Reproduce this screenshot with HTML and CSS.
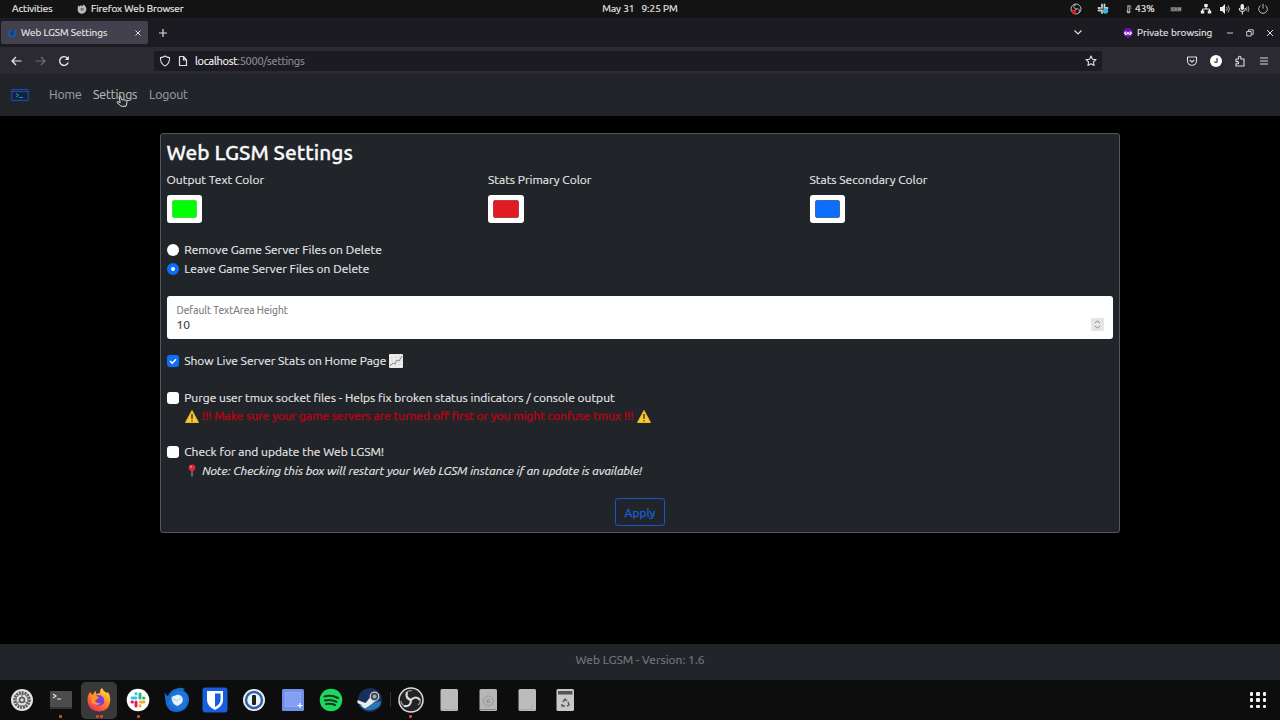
FILE: index.html
```html
<!DOCTYPE html>
<html lang="en">
<head>
<meta charset="utf-8">
<title>Web LGSM Settings</title>
<link rel="stylesheet" href="styles.css">
</head>
<body>
<header class="system-bar">
  <div class="system-left">
    <span class="activities">Activities</span>
    <svg class="fox-mini" viewBox="0 0 10 10"><path d="M1 1.500l1.500 1 1.500-1.500 1 1.500L6.500.5Q10 3 9.300 6 8 10 4.500 9.700.5 9 .6 5z" fill="#bbb"/><path d="M3.500 4h3l.5 2-2 1-1.500-1z" fill="#777"/></svg>
    <span class="app-name">Firefox Web Browser</span>
  </div>
  <time class="clock"><span>May 31</span><span>9:25 PM</span></time>
  <div class="system-right">
    <svg class="ic-obs" viewBox="0 0 12 12"><circle cx="6" cy="6" r="5" fill="none" stroke="#bbb"/><path d="M6 6C3 5 3 2 6 2M6 6c3-1 4 1 3 4M6 6c0 2-2 3-4 2" fill="none" stroke="#bbb"/><circle cx="3.800" cy="8.800" r="2.200" fill="#e01b24"/></svg>
    <svg class="ic-slack" viewBox="0 0 12 12"><path d="M5 1.500V5M1.500 5H3M7.500 1.500V5M10.500 5H9M1.500 7.500H5M5 10V9" stroke="#ccc" stroke-width="1.800" stroke-linecap="round"/><circle cx="8.500" cy="8" r="2.700" fill="#35b8e0"/></svg>
    <svg class="ic-temp" viewBox="0 0 8 12"><path d="M2 1.500h3v5l1 2.500-1 2H2L1 9l1-2.500z" fill="#aaa"/><path d="M3.500 3v6" stroke="#333"/><path d="M5 2.500h2M5 5h2" stroke="#aaa"/></svg>
    <span class="percent">43%</span>
    <svg class="ic-key" viewBox="0 0 12 8"><rect x=".5" y="2" width="11" height="4.500" fill="#555"/><path d="M4 3H2v2.500h2M5.300 2.500v3.500M7.500 3L5.500 4.500l2 1M8.500 5.700V3h2v2.700M8.500 4.500h2" fill="none" stroke="#aaa" stroke-width=".7"/></svg>
    <svg class="ic-net" viewBox="0 0 12 12"><path d="M4.300 1h3.400v3H4.300zM.8 7.500h3.400v3H.8zM7.800 7.500h3.400v3H7.800z" fill="#eee"/><path d="M6 4v2M2.500 8V6h7v2" fill="none" stroke="#eee"/></svg>
    <svg class="ic-vol" viewBox="0 0 12 12"><path d="M1 4h2l3-3v10L3 8H1z" fill="#eee"/><path d="M7.500 4q1.500 2 0 4M9 2.500q3 3.500 0 7" fill="none" stroke="#aaa"/></svg>
    <svg class="ic-mic" viewBox="0 0 12 12"><rect x="2.500" y="1" width="3.500" height="6" rx="1.700" fill="#eee"/><path d="M1.300 5v1q0 2.500 3 2.500t3-2.500V5M4.300 8v3.500" fill="none" stroke="#eee"/><path d="M8.500 4q1 2 0 4M10 3q1.800 3 0 6" fill="none" stroke="#999"/></svg>
    <svg class="ic-power" viewBox="0 0 12 12"><path d="M3.500 2.500a4.300 4.300 0 1 0 5 0M6 .8v4.800" fill="none" stroke="#bbb"/></svg>
  </div>
</header>

<div class="tab-strip">
  <div class="tab">
    <svg class="favicon" viewBox="0 0 8 10"><path d="M0 4l2-2 1-1v2l5-1-1 7H1z" fill="#155fae"/><path d="M1 4l5-1v4l-3 1z" fill="#0c3f83"/></svg>
    <span class="tab-title">Web LGSM Settings</span>
    <svg class="tab-close" viewBox="0 0 6 6"><path d="M.5.5l5 5M5.500.5l-5 5" stroke="#ddd"/></svg>
  </div>
  <svg class="new-tab" viewBox="0 0 8 8"><path d="M4 0v8M0 4h8" stroke="#ddd" stroke-width="1.200"/></svg>
  <div class="window-tools">
    <svg class="ic-down" viewBox="0 0 8 5"><path d="M.5.5L4 4 7.500.5" fill="none" stroke="#ddd" stroke-width="1.200"/></svg>
    <svg class="ic-mask" viewBox="0 0 10 10"><path d="M1 1.500Q5-1 9 1.500 11 8 5 10-1 8 1 1.500z" fill="#7111b5"/><path d="M1.200 4q2-1 3.800.4Q7 3 8.800 4 9 7 7 7 6 7 5 5.700 4 7 3 7 1 7 1.200 4z" fill="#fff"/><circle cx="3.200" cy="5" r=".8" fill="#7111b5"/><circle cx="6.800" cy="5" r=".8" fill="#7111b5"/></svg>
    <span class="private-label">Private browsing</span>
    <svg class="ic-min" viewBox="0 0 8 8"><path d="M1 4h6" stroke="#ccc"/></svg>
    <svg class="ic-max" viewBox="0 0 8 8"><path d="M.7 2.500h4.500v4.500H.7zM2.500 2V.8h4.700v4.500H6" fill="none" stroke="#ccc"/></svg>
    <svg class="ic-close" viewBox="0 0 8 8"><path d="M1 1l6 6M7 1L1 7" stroke="#ddd"/></svg>
  </div>
</div>

<div class="toolbar">
  <svg class="ic-back" viewBox="0 0 11 10"><path d="M10.500 5H1M5 1L1 5l4 4" fill="none" stroke="#eee" stroke-width="1.200"/></svg>
  <svg class="ic-forward" viewBox="0 0 11 10"><path d="M.5 5H10M6 1l4 4-4 4" fill="none" stroke="#6d6c74" stroke-width="1.200"/></svg>
  <svg class="ic-reload" viewBox="0 0 12 12"><path d="M10.200 7.500A4.400 4.400 0 1 1 9.300 3" fill="none" stroke="#eee" stroke-width="1.300"/><path d="M10.800 1v4H6.800z" fill="#eee"/></svg>
  <div class="url-bar">
    <svg class="ic-shield" viewBox="0 0 12 12"><path d="M6 1Q8 2.400 10.500 2.600 11 8.500 6 11 1 8.500 1.500 2.600 4 2.400 6 1z" fill="none" stroke="#ddd" stroke-width="1.100"/></svg>
    <svg class="ic-page" viewBox="0 0 10 12"><path d="M1.500 1.500h4L8.500 5v5.500h-7zM5.500 1.500V5h3" fill="none" stroke="#ddd" stroke-width="1.200" stroke-linejoin="round"/></svg>
    <span class="url"><b>localhost</b>:5000/settings</span>
    <svg class="ic-star" viewBox="0 0 12 12"><path d="M6 1l1.500 3.200 3.500.4-2.600 2.400.7 3.500L6 8.800l-3.100 1.700.7-3.500L1 4.600l3.500-.4z" fill="none" stroke="#ddd" stroke-width="1.100" stroke-linejoin="round"/></svg>
  </div>
  <div class="toolbar-tools">
    <svg viewBox="0 0 12 12"><path d="M1.500 2h9v4a4.500 4.300 0 0 1-9 0zM3.700 5L6 7l2.300-2" fill="none" stroke="#ddd" stroke-width="1.100" stroke-linejoin="round"/></svg>
    <span class="profile">J</span>
    <svg viewBox="0 0 12 12"><path d="M2 4h2.500V2.500a1.200 1.200 0 0 1 2.400 0V4H10v7H2V8.800h1.500a1 1 0 0 0 0-2.200H2z" fill="none" stroke="#ddd" stroke-width="1.100" stroke-linejoin="round"/></svg>
    <svg viewBox="0 0 12 12"><path d="M2 3h8M2 6h8M2 9h8" stroke="#ddd" stroke-width="1.100"/></svg>
  </div>
</div>

<nav class="navbar">
  <svg class="brand" viewBox="0 0 18 12"><rect x=".7" y=".7" width="16.600" height="10.600" rx="1" fill="#12233d" stroke="#2346a8" stroke-width="1.200"/><path d="M1 2.500h16" stroke="#2346a8"/><path d="M5 4.500l2.500 1.700L5 8" fill="none" stroke="#18a5b5"/><path d="M8 8.500h4" stroke="#1f8fa8"/></svg>
  <a class="nav-home">Home</a>
  <a class="nav-settings">Settings
    <svg class="pointer" viewBox="0 0 12 12"><path d="M3 1.500q1-1 1.700 0l.8 3 4.300.7q1.300.4 1.200 2L10 11.300H5.200L1 7.500q0-1.500 1.500-.7L4.200 7.600z" fill="#26292d" stroke="#ddd"/></svg>
  </a>
  <a class="nav-logout">Logout</a>
</nav>

<main class="page">
  <form class="card">
    <h1>Web LGSM Settings</h1>
    <div class="colors">
      <div><label>Output Text Color</label><span class="swatch"><i class="green"></i></span></div>
      <div><label>Stats Primary Color</label><span class="swatch"><i class="red"></i></span></div>
      <div><label>Stats Secondary Color</label><span class="swatch"><i class="blue"></i></span></div>
    </div>
    <div class="choice first"><span class="radio"></span><span>Remove Game Server Files on Delete</span></div>
    <div class="choice"><span class="radio on"></span><span>Leave Game Server Files on Delete</span></div>
    <div class="number-field">
      <div><div class="field-label">Default TextArea Height</div><div class="field-value">10</div></div>
      <span class="spinner"><svg viewBox="0 0 13 13"><path d="M4 5l2.500-2L9 5M4 8l2.500 2L9 8" fill="none" stroke="#888"/></svg></span>
    </div>
    <div class="choice live">
      <span class="check on"><svg viewBox="0 0 12 12"><path d="M3 6l2.200 2.200L9 4.200" fill="none" stroke="#fff" stroke-width="1.600"/></svg></span>
      <span>Show Live Server Stats on Home Page</span>
      <svg class="chart" viewBox="0 0 14 14"><rect width="14" height="14" rx="1" fill="#eee"/><path d="M3 0v14M6.500 0v14M10 0v14M0 3.500h14M0 7h14M0 10.500h14" stroke="#d5d5d5" stroke-width=".5"/><path d="M1 12l3-3 2 1 2-4 2 1 3-5" fill="none" stroke="#888"/></svg>
    </div>
    <div class="choice purge"><span class="check"></span><span>Purge user tmux socket files - Helps fix broken status indicators / console output</span></div>
    <div class="warning">
      <svg viewBox="0 0 14 13"><path d="M7 .5L13.500 12.500H.5z" fill="#fbc932" stroke="#e7b72a" stroke-linejoin="round"/><path d="M7 4v5M7 10.200v1.300" stroke="#443b22" stroke-width="1.500"/></svg>
      <span class="warning-text">!!! Make sure your game servers are turned off first or you might confuse tmux !!!</span>
      <svg viewBox="0 0 14 13"><path d="M7 .5L13.500 12.500H.5z" fill="#fbc932" stroke="#e7b72a" stroke-linejoin="round"/><path d="M7 4v5M7 10.200v1.300" stroke="#443b22" stroke-width="1.500"/></svg>
    </div>
    <div class="choice update"><span class="check"></span><span>Check for and update the Web LGSM!</span></div>
    <div class="note">
      <svg viewBox="0 0 8 13"><path d="M4 6v6.500" stroke="#8796a0" stroke-width="1.200"/><circle cx="4" cy="3.800" r="3.300" fill="#e02830"/><circle cx="3" cy="2.700" r="1" fill="#ff8580"/></svg>
      <em>Note: Checking this box will restart your Web LGSM instance if an update is available!</em>
    </div>
    <button type="button" class="apply">Apply</button>
  </form>
</main>

<footer class="footer"><span>Web LGSM - Version: 1.6</span></footer>

<div class="dock">
  <div class="apps">
    <span class="app"><svg viewBox="0 0 26 26"><circle cx="13" cy="13" r="11" fill="#e0e0e0"/><circle cx="13" cy="13" r="7.500" fill="none" stroke="#555" stroke-width="2.500" stroke-dasharray="2 .9"/><circle cx="13" cy="13" r="6" fill="none" stroke="#666"/><circle cx="13" cy="13" r="2.500" fill="#ddd" stroke="#555" stroke-width="1.500"/><path d="M13 7v4M8 16l3.500-2M18 16l-3.500-2" stroke="#666"/></svg></span>
    <span class="app running"><svg viewBox="0 0 26 26"><rect x="2" y="4" width="22" height="18" rx="1" fill="#4b4c4c"/><path d="M2 21h22" stroke="#333" stroke-width="2"/><path d="M5 7l3 2-3 2M9 12h4" fill="none" stroke="#e6e6e6" stroke-width="1.200"/></svg></span>
    <span class="app running twice active"><svg viewBox="0 0 26 26"><defs><linearGradient id="fire" x1=".8" y1="0" x2=".2" y2="1"><stop stop-color="#ffe14a"/><stop offset=".45" stop-color="#ff8b25"/><stop offset="1" stop-color="#f1255c"/></linearGradient></defs><path d="M4 5l2.500 3Q8 5 10 4v3l4-1q0-4 2-5 1 3 5 5l1-1q3 5 2 10-1 9-11 9.500Q3 24 1.700 15 1 9 4 5z" fill="url(#fire)"/><path d="M8 10q5-4 9 0 3 5-1 8-5 2-8-1l-1-3 4-1z" fill="#7a3dda"/><path d="M6 8q5 0 7 3l-4 2q1 4 6 3-4 4-9 0-2-3 0-8z" fill="#ff922b"/></svg></span>
    <span class="app running"><svg viewBox="0 0 26 26"><circle cx="13" cy="13" r="11.300" fill="#fff"/><g stroke-width="3" stroke-linecap="round"><path d="M11 6.500V7M7 11h4" stroke="#36c5f0"/><path d="M15 7v4M19 11h-.5" stroke="#2eb67d"/><path d="M15.500 15H19M15 18.500v.5" stroke="#ecb22e"/><path d="M7 15h.5M11 15v4" stroke="#e01e5a"/></g></svg></span>
    <span class="app"><svg viewBox="0 0 26 26"><path d="M.5 5q1 3 3.500 4Q7 2 13 1.500q4-1.500 8 .5l-2 1q7 4 6 11-2 11-12 11T1.500 15z" fill="#1769cf"/><path d="M8 7q4-5 10-3 6 4 5 10-1 8-8 9L4 17z" fill="#1f78d8"/><path d="M7.500 10l5-2q4-1 6 3 1 4-2 6l-3 2q-6-2-6-9z" fill="#e5f2ff"/><path d="M8 11l5 3 4-3" fill="none" stroke="#a5cdf0"/></svg></span>
    <span class="app"><svg viewBox="0 0 26 26"><rect x=".5" y=".5" width="25" height="25" rx="3" fill="#175ddc"/><path d="M5 4h16v9q0 6-8 10-8-4-8-10z" fill="#fff"/><path d="M13 6.500h5.500V13q0 4-5.500 7z" fill="#175ddc"/></svg></span>
    <span class="app"><svg viewBox="0 0 26 26"><circle cx="13" cy="13" r="11" fill="#f1f1f1"/><circle cx="13" cy="13" r="8" fill="#eef3fa" stroke="#2d63a8" stroke-width="2.500"/><rect x="11" y="8" width="4" height="10" rx="1" fill="#222"/></svg></span>
    <span class="app"><svg viewBox="0 0 26 26"><rect x="2" y="2" width="22" height="22" rx="1.500" fill="#7190eb"/><rect x="5.500" y="5.500" width="15" height="14" fill="#849ff2" stroke="#a5bcff" stroke-dasharray="1 1"/><path d="M20 16v5M17.500 18.500h5" stroke="#fff" stroke-width="1.200"/></svg></span>
    <span class="app"><svg viewBox="0 0 26 26"><circle cx="13" cy="13" r="11.300" fill="#1ed760"/><path d="M6.500 9.500q7-2 13.500 1.500M7 13.500q6-1.500 11.500 1.300M8 17q5-1 9 1" fill="none" stroke="#10391e" stroke-width="2" stroke-linecap="round"/></svg></span>
    <span class="app"><svg viewBox="0 0 26 26"><circle cx="13" cy="13" r="12" fill="#172f5a"/><path d="M2 18q9 10 21 1l1-5z" fill="#2878b6"/><path d="M.5 13l8 3 5-6 5 4-8 6q-4 3-6-2l-4-2z" fill="#eee"/><circle cx="17.500" cy="9.500" r="4.300" fill="#31475e" stroke="#ccc" stroke-width="1.300"/><circle cx="17.500" cy="9.500" r="2" fill="#aaa"/></svg></span>
    <span class="divider"></span>
    <span class="app running"><svg viewBox="0 0 26 26"><circle cx="13" cy="13" r="12" fill="#242326" stroke="#ddd" stroke-width="1.500"/><path d="M13 13Q7 11 9 5M13 13q5-5 9 0M13 13q0 7-7 6" fill="none" stroke="#ddd" stroke-width="2.200"/><path d="M9 5q2-2 5-1M22 13q1 3-2 5M6 19q-3-2-3-5" fill="none" stroke="#999" stroke-width="1.200"/></svg></span>
    <span class="app"><svg viewBox="0 0 26 26"><rect x="4.500" y="2" width="17.500" height="22" rx="1.500" fill="#bcbcbc"/><path d="M5 22.500h16M18 18v2" stroke="#aaa"/></svg></span>
    <span class="app"><svg viewBox="0 0 26 26"><rect x="4.500" y="2" width="17.500" height="22" rx="1.500" fill="#b6b6b6"/><circle cx="13.300" cy="14" r="5" fill="none" stroke="#989898"/><circle cx="13.300" cy="14" r="1.500" fill="none" stroke="#888"/><path d="M5 22.500h16" stroke="#888"/></svg></span>
    <span class="app"><svg viewBox="0 0 26 26"><rect x="4.500" y="2" width="17.500" height="22" rx="1.500" fill="#bcbcbc"/><path d="M5 22.500h16M18 18v2" stroke="#aaa"/></svg></span>
    <span class="app"><svg viewBox="0 0 26 26"><rect x="4.500" y="2" width="17.500" height="22" rx="1.500" fill="#c9c9c9"/><rect x="6" y="4" width="14.500" height="3.500" fill="#555"/><path d="M11 15l2-3 2 2M16 15l1 3-2 1M13 19h-3v-2" fill="none" stroke="#555" stroke-width="1.400"/></svg></span>
  </div>
  <span class="app-grid"><i></i><i></i><i></i><i></i><i></i><i></i><i></i><i></i><i></i></span>
</div>
</body>
</html>
```

FILE: styles.css
```css
* { box-sizing: border-box; }
body {
  margin: 0;
  width: 1280px;
  height: 720px;
  overflow: hidden;
  display: flex;
  flex-direction: column;
  background: #000;
  color: #e9eaeb;
  font: 12px/18px Ubuntu, "Noto Sans", "Open Sans", sans-serif;
  -webkit-text-stroke: .15px;
  white-space: nowrap;
}
svg { display: block; flex: none; }

.system-bar {
  height: 18px;
  display: grid;
  grid-template-columns: 1fr auto 1fr;
  align-items: center;
  background: #131313;
  font-size: 10px;
  -webkit-text-stroke: .2px;
}
.system-left, .system-right, .clock { display: flex; align-items: center; }
.activities { margin-left: 12px; width: 65px; letter-spacing: -.05px; }
.fox-mini { width: 10px; height: 10px; margin-right: 4px; }
.app-name { letter-spacing: -.08px; }
.clock { gap: 7px; }
.system-right { justify-content: flex-end; padding-right: 11px; }
.system-right svg { width: 12px; height: 12px; }
.system-right .ic-slack { margin-left: 15px; }
.system-right .ic-temp { width: 8px; height: 10px; margin-left: 16px; }
.percent { width: 22px; margin-left: 2px; }
.system-right .ic-key { height: 8px; margin-left: 13px; }
.ic-net { margin-left: 18px; }
.ic-vol, .ic-mic, .ic-power { margin-left: 7px; }

.tab-strip { height: 29px; display: flex; align-items: center; background: #1c1b22; font-size: 10px; }
.tab {
  width: 147px;
  height: 23px;
  margin-left: 1px;
  padding: 0 7px 0 7px;
  display: flex;
  align-items: center;
  border-radius: 2px;
  background: #42414d;
}
.favicon { width: 8px; height: 10px; margin-right: 5px; }
.tab-title { flex: 1; letter-spacing: -.06px; }
.tab-close { width: 6px; height: 6px; }
.new-tab { width: 8px; height: 8px; margin-left: 11px; }
.window-tools { margin-left: auto; padding-right: 6px; display: flex; align-items: center; }
.ic-down { width: 8px; height: 5px; margin-right: 41px; }
.ic-mask { width: 10px; height: 10px; margin-right: 4px; }
.private-label { width: 75px; }
.ic-min { width: 8px; height: 8px; margin-left: 14px; }
.ic-max, .ic-close { width: 8px; height: 8px; margin-left: 12px; }

.toolbar { height: 27px; display: flex; align-items: center; background: #2b2a33; font-size: 11px; }
.ic-back { width: 11px; height: 10px; margin-left: 10.500px; }
.ic-forward { width: 11px; height: 10px; margin-left: 13px; }
.ic-reload { width: 12px; height: 12px; margin-left: 12.500px; }
.url-bar {
  width: 948px;
  height: 20px;
  margin-left: 84px;
  padding: 0 5px;
  display: flex;
  align-items: center;
  border-radius: 2px;
  background: #1c1b22;
  color: #8f8f98;
}
.ic-shield { width: 12px; height: 12px; }
.ic-page { width: 10px; height: 12px; margin: 0 7px; }
.url { flex: 1; letter-spacing: -.28px; }
.url b { font-weight: 400; color: #fbfbfe; }
.ic-star { width: 12px; height: 12px; }
.toolbar-tools { margin-left: auto; padding-right: 10px; display: flex; align-items: center; gap: 12px; }
.toolbar-tools svg { width: 12px; height: 12px; }
.profile {
  width: 12px;
  height: 12px;
  border-radius: 50%;
  background: #fff;
  color: #333;
  font: 700 7px/12px Roboto, sans-serif;
  text-align: center;
}

.navbar { height: 42px; display: flex; align-items: center; background: #212529; color: #96999b; font-size: 12.300px; letter-spacing: -.13px; }
.brand { width: 18px; height: 12px; margin-left: 11px; }
.nav-home { margin-left: 20px; width: 44px; }
.nav-settings { position: relative; width: 56px; color: #b4b6b7; }
.pointer { position: absolute; left: 23px; top: 9px; width: 12px; height: 12px; }

.page { height: 528px; padding: 17px 160px 0; }
.card {
  width: 960px;
  height: 400px;
  padding: 7px 5.500px 0;
  display: flex;
  flex-direction: column;
  background: #212529;
  border: 1px solid #53575b;
  border-radius: 3px;
}
h1 { margin: -2px 0 0; font-size: 20.900px; line-height: 27px; font-weight: 500; color: #f8f9fa; -webkit-text-stroke: .3px; }
.colors { display: grid; grid-template-columns: repeat(3, 321.500px); margin-top: 5px; }
.colors label { display: block; height: 23.500px; }
.swatch { display: block; width: 35.500px; height: 28px; padding: 5px; border-radius: 3px; background: #fff; }
.swatch i { display: block; height: 18px; border-radius: 2px; border: 1px solid; }
.swatch .green { background: #0f0; border-color: #4bdc4b; }
.swatch .red { background: #e01b24; border-color: #b54048; }
.swatch .blue { background: #0d6efd; border-color: #376bb3; }

.choice { height: 19px; display: flex; align-items: center; }
.choice.first { margin-top: 17.500px; }
.radio, .check { width: 12px; height: 12px; margin-right: 5.700px; background: #fff; flex: none; }
.radio { border-radius: 50%; }
.radio.on { border: 4px solid #0d6efd; }
.check { border-radius: 3px; }
.check.on { background: #0d6efd; }
.number-field {
  width: 946.500px;
  height: 43px;
  margin-top: 18px;
  padding: 6.500px 9.500px 0 10px;
  display: flex;
  justify-content: space-between;
  border-radius: 3px;
  background: #fff;
  color: #30353a;
}
.field-label { font-size: 10.200px; line-height: 14px; color: #73777b; }
.field-value { line-height: 15px; }
.spinner { width: 13px; height: 13px; margin-top: 15px; background: #e5e5e5; border-radius: 1px; }
.choice.live { margin-top: 12px; }
.chart { width: 14px; height: 14px; margin-left: 3px; }
.choice.purge { margin-top: 18px; }
.warning, .note { height: 18px; display: flex; align-items: center; padding-left: 18px; }
.warning { color: #b00514; }
.warning svg { width: 14px; height: 13px; }
.warning-text { width: 433px; margin: 0 2px 0 3px; -webkit-text-stroke: .5px; }
.choice.update { margin-top: 17.500px; }
.note svg { width: 8px; height: 13px; margin: 0 6.700px 0 3px; }
.note em { letter-spacing: -.055px; }
.apply {
  width: 50px;
  height: 28px;
  margin: 18.500px auto 0;
  padding: 1px 0 0;
  border: 1px solid #1858c4;
  border-radius: 3px;
  background: transparent;
  color: #1762dc;
  font: inherit;
  -webkit-text-stroke: .3px;
}
.footer { height: 36px; display: flex; justify-content: center; padding-top: 7px; background: #212529; color: #777b7f; }

.dock { height: 40px; display: flex; justify-content: space-between; background: #0d0d0e; }
.apps { display: flex; padding-left: 2.500px; }
.app { width: 38.700px; height: 40px; display: flex; justify-content: center; align-items: center; position: relative; }
.app svg { width: 26px; height: 26px; }
.app.active::before { content: ""; position: absolute; inset: 2px 1.500px 1px; border-radius: 5px; background: #393939; }
.app.active svg { position: relative; }
.app.running::after { content: ""; position: absolute; left: 18px; bottom: 2px; width: 3px; height: 3px; border-radius: 1px; background: #d14936; }
.app.twice::after { left: 16px; box-shadow: 4px 0 #d14936; }
.divider { width: 1px; height: 15px; margin: 12px 0 0 1px; background: #333; }
.app-grid { display: grid; grid-template-columns: repeat(3, 3.500px); grid-auto-rows: 3.500px; gap: 2.800px; margin: 12px 14px 0 0; align-content: start; }
.app-grid i { background: #f2f2f2; border-radius: 1px; }
```
